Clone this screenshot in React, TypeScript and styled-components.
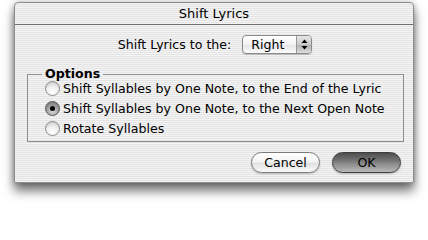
import React from 'react';
import styled, { createGlobalStyle } from 'styled-components';

const GlobalStyle = createGlobalStyle`
  html, body {
    margin: 0;
    padding: 0;
    background: #ffffff;
  }
  body {
    font-family: "DejaVu Sans", "Liberation Sans", sans-serif;
    color: #000;
  }
`;

const pinstripe = `repeating-linear-gradient(to bottom, #f4f4f4 0px, #f4f4f4 1px, #e4e4e4 1px, #e4e4e4 2px)`;

const Stage = styled.div`
  width: 428px;
  height: 206px;
  padding: 2px 14px 0 14px;
  box-sizing: border-box;
  overflow: hidden;
`;

const Window = styled.div`
  width: 400px;
  height: 181px;
  box-sizing: border-box;
  border: 1px solid #8c8c8c;
  border-radius: 4px 4px 0 0;
  background: ${pinstripe};
  box-shadow: 0 8px 11px rgba(0, 0, 0, 0.55), 0 0 6px rgba(0, 0, 0, 0.25);
  display: flex;
  flex-direction: column;
`;

const TitleBar = styled.div`
  height: 21px;
  flex: none;
  display: flex;
  align-items: center;
  justify-content: center;
  border-bottom: 1px solid #6e6e6e;
  font-size: 13px;
`;

const Body = styled.div`
  flex: 1;
  display: flex;
  flex-direction: column;
  padding: 10px 10px 0 12px;
`;

const ShiftRow = styled.div`
  display: flex;
  align-items: center;
  justify-content: center;
  gap: 11px;
  font-size: 12.6px;
`;

const Popup = styled.div`
  width: 70px;
  height: 19px;
  box-sizing: border-box;
  border: 1px solid #8a8a8a;
  border-radius: 4px;
  display: flex;
  overflow: hidden;
  background: linear-gradient(to bottom, #ffffff 0%, #f2f2f2 50%, #e6e6e6 55%, #fbfbfb 100%);
  box-shadow: 0 1px 1px rgba(0, 0, 0, 0.2);
`;

const PopupLabel = styled.div`
  flex: 1;
  display: flex;
  align-items: center;
  padding-left: 8px;
  font-size: 12.6px;
`;

const PopupArrows = styled.div`
  width: 14px;
  border-left: 1px solid #9a9a9a;
  background: linear-gradient(to bottom, #e8e8e8 0%, #c8c8c8 50%, #b4b4b4 55%, #dcdcdc 100%);
  display: flex;
  align-items: center;
  justify-content: center;
`;

const Group = styled.fieldset`
  margin: 14px 0 0 0;
  width: 377px;
  height: 74px;
  box-sizing: border-box;
  border: 1px solid #8e8e8e;
  padding: 1px 0 0 17px;
  display: flex;
  flex-direction: column;
  gap: 5px;
`;

const Legend = styled.legend`
  font-weight: bold;
  font-size: 12.6px;
  padding: 0 3px;
  margin-left: -3px;
  line-height: 12px;
`;

const RadioRow = styled.label`
  display: flex;
  align-items: center;
  gap: 3px;
  font-size: 12.6px;
  height: 15px;
  white-space: nowrap;
`;

const RadioCircle = styled.span<{ $on?: boolean }>`
  width: 15px;
  height: 15px;
  box-sizing: border-box;
  border-radius: 50%;
  border: 1px solid ${p => (p.$on ? '#555' : '#8a8a8a')};
  background: ${p =>
    p.$on
      ? 'radial-gradient(circle at 50% 75%, #d8d8d8 0%, #9a9a9a 55%, #6a6a6a 100%)'
      : 'radial-gradient(circle at 50% 80%, #ffffff 0%, #f2f2f2 45%, #c4c4c4 100%)'};
  display: flex;
  align-items: center;
  justify-content: center;
  flex: none;
  &::after {
    content: '';
    width: 5px;
    height: 5px;
    border-radius: 50%;
    background: #000;
    display: ${p => (p.$on ? 'block' : 'none')};
  }
`;

const Buttons = styled.div`
  display: flex;
  justify-content: flex-end;
  gap: 12px;
  margin-top: 10px;
  padding-right: 2px;
`;

const Button = styled.div<{ $default?: boolean }>`
  width: 69px;
  height: 21px;
  box-sizing: border-box;
  border-radius: 11px;
  border: 1px solid ${p => (p.$default ? '#3c3c3c' : '#7a7a7a')};
  display: flex;
  align-items: center;
  justify-content: center;
  font-size: 12.6px;
  background: ${p =>
    p.$default
      ? 'linear-gradient(to bottom, #4e4e4e 0%, #747474 40%, #8a8a8a 55%, #b8b8b8 100%)'
      : 'linear-gradient(to bottom, #ffffff 0%, #f4f4f4 45%, #e2e2e2 55%, #fafafa 100%)'};
  box-shadow: 0 1px 2px rgba(0, 0, 0, 0.25);
`;

const options = [
  'Shift Syllables by One Note, to the End of the Lyric',
  'Shift Syllables by One Note, to the Next Open Note',
  'Rotate Syllables',
];

const App: React.FC = () => {
  return (
    <Stage>
      <GlobalStyle />
      <Window>
        <TitleBar>Shift Lyrics</TitleBar>
        <Body>
          <ShiftRow>
            <span>Shift Lyrics to the:</span>
            <Popup>
              <PopupLabel>Right</PopupLabel>
              <PopupArrows>
                <svg width="7" height="11" viewBox="0 0 7 11">
                  <path d="M3.5 0.5 L6.5 4 L0.5 4 Z" fill="#000" />
                  <path d="M3.5 10.5 L6.5 7 L0.5 7 Z" fill="#000" />
                </svg>
              </PopupArrows>
            </Popup>
          </ShiftRow>
          <Group>
            <Legend>Options</Legend>
            {options.map((o, i) => (
              <RadioRow key={o}>
                <RadioCircle $on={i === 1} />
                {o}
              </RadioRow>
            ))}
          </Group>
          <Buttons>
            <Button>Cancel</Button>
            <Button $default>OK</Button>
          </Buttons>
        </Body>
      </Window>
    </Stage>
  );
};

export default App;
